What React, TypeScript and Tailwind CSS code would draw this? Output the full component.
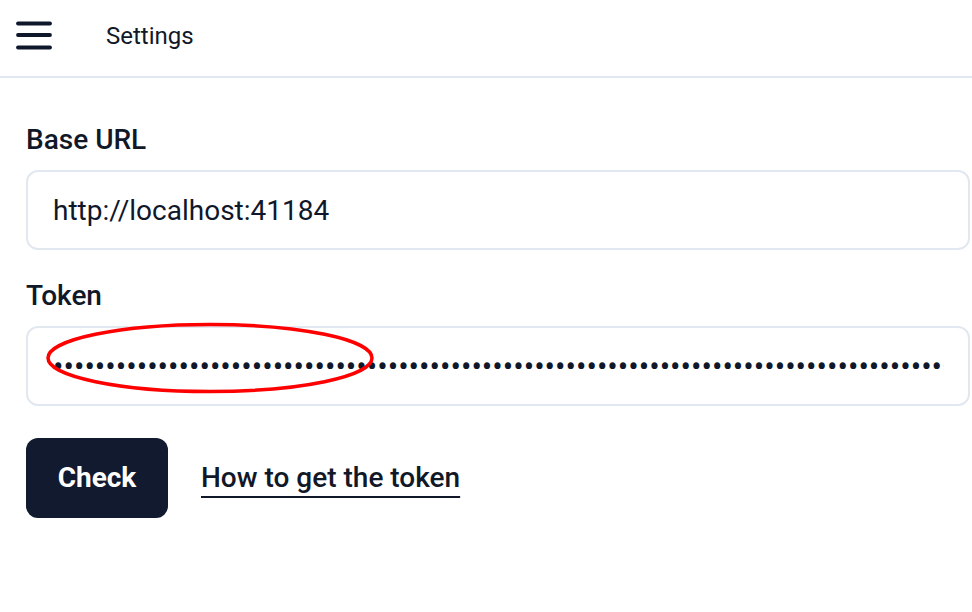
import React from "react";

export default function App() {
  const token = "x".repeat(140);
  return (
    <div className="min-h-[612px] w-[972px] bg-white text-[#111827]" style={{ fontFamily: "Roboto, 'Noto Sans', sans-serif" }}>
      <header className="flex h-[78px] items-center border-b-2 border-[#e2e8f0]">
        <button className="ml-[16px] flex h-[36px] w-[36px] items-center justify-center -mt-[4px]">
          <svg width="36" height="30" viewBox="0 0 36 30">
            <g stroke="#0f172a" strokeWidth="3.8" strokeLinecap="round">
              <line x1="2" y1="2.5" x2="34" y2="2.5" />
              <line x1="2" y1="14" x2="34" y2="14" />
              <line x1="2" y1="26.5" x2="34" y2="26.5" />
            </g>
          </svg>
        </button>
        <span className="ml-[54px] -mt-[4px] text-[24px] leading-[30px]">Settings</span>
      </header>
      <main className="px-[26px] pt-[46px]">
        <label className="block text-[28px] font-medium leading-[32px]">Base URL</label>
        <input
          readOnly
          value="http://localhost:41184"
          className="mt-[14px] block h-[80px] w-[944px] rounded-[12px] border-2 border-[#e2e8f0] px-[25px] text-[28px] text-[#0f172a] outline-none"
        />
        <label className="mt-[30px] block text-[28px] font-medium leading-[32px]">Token</label>
        <div className="relative mt-[14px]">
          <input
            readOnly
            type="password"
            value={token}
            className="block h-[80px] w-[944px] rounded-[12px] border-2 border-[#e2e8f0] pl-[25px] pr-[24px] text-[31px] text-[#0f172a] outline-none"
          />
          <svg className="pointer-events-none absolute left-[18px] top-[-4px]" width="332" height="74" viewBox="0 0 332 74">
            <ellipse cx="166" cy="36" rx="162" ry="33.5" fill="none" stroke="#ff0000" strokeWidth="3.5" />
          </svg>
        </div>
        <div className="mt-[32px] flex items-center">
          <button className="h-[80px] w-[142px] rounded-[12px] bg-[#111a2e] text-[28px] font-bold text-white">Check</button>
          <a className="ml-[33px] text-[28px] font-medium text-[#111827] underline decoration-2 underline-offset-[9px]">How to get the token</a>
        </div>
      </main>
    </div>
  );
}
